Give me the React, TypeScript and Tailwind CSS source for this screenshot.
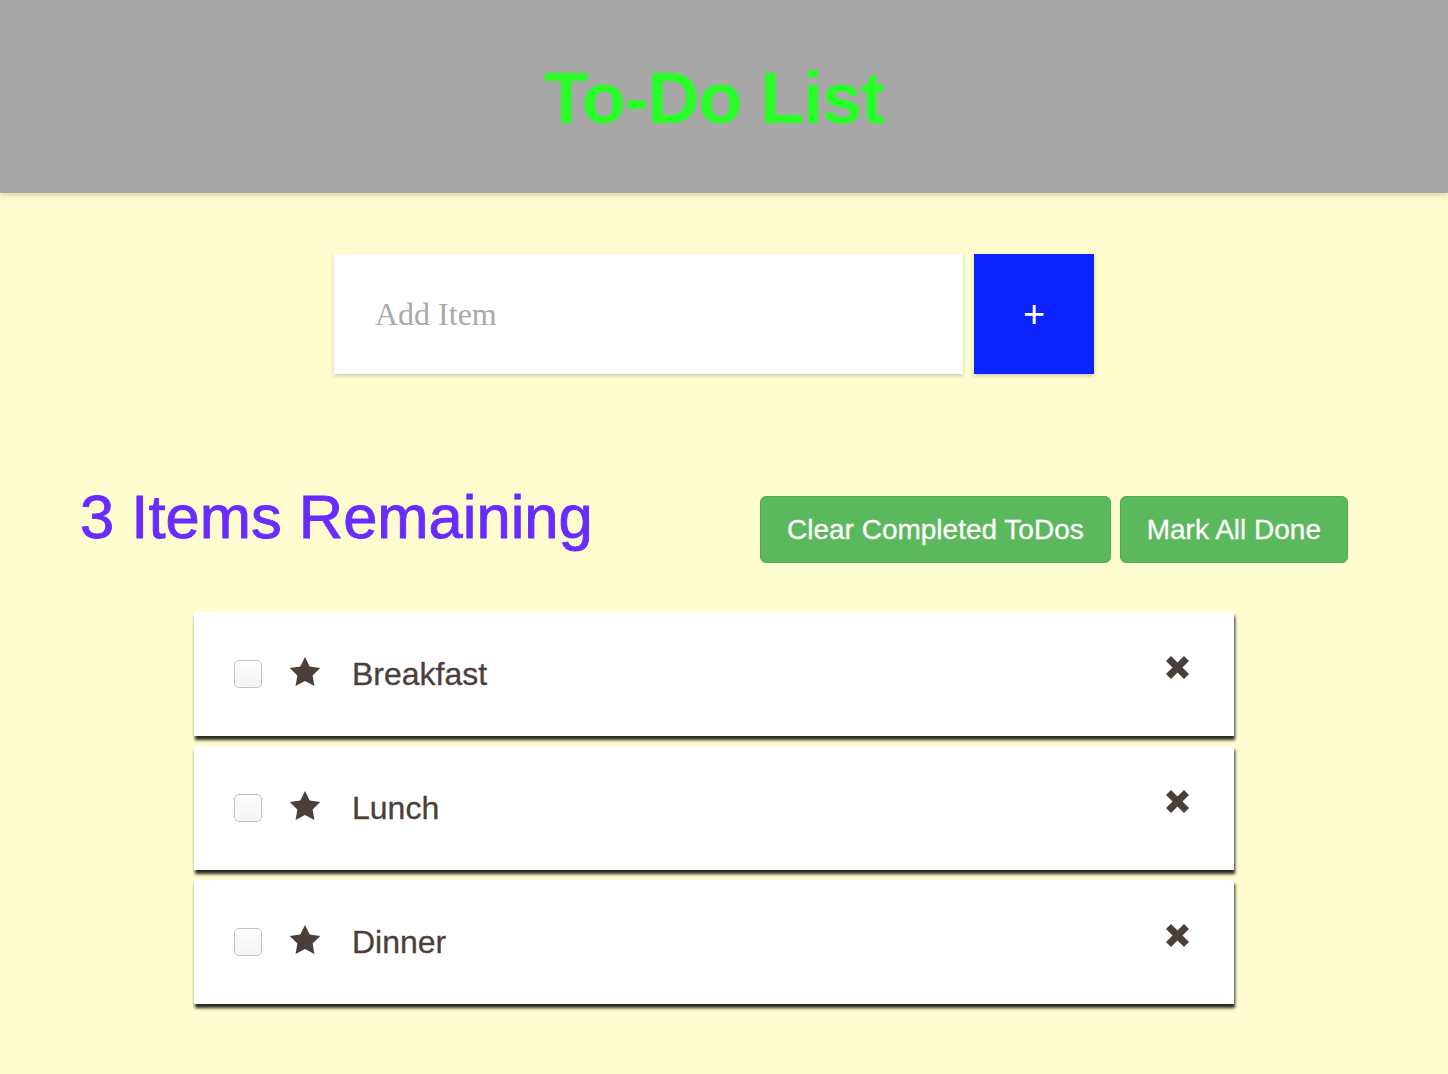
import React, { useState } from "react";

type Todo = { id: number; text: string; done: boolean };

const sans = "font-['Liberation_Sans',Arial,sans-serif]";

const Star = () => (
  <svg width="32" height="29" viewBox="2 2 20 19.02" className="shrink-0 mb-[6px]">
    <polygon
      points="12,2 15.09,8.26 22,9.27 17,14.14 18.18,21.02 12,17.77 5.82,21.02 7,14.14 2,9.27 8.91,8.26"
      fill="#4b3f3b"
    />
  </svg>
);

const Cross = () => (
  <svg width="27" height="27" viewBox="0 0 27 27">
    <line x1="4.5" y1="4.5" x2="22.5" y2="22.5" stroke="#4b3f3b" strokeWidth="7" />
    <line x1="22.5" y1="4.5" x2="4.5" y2="22.5" stroke="#4b3f3b" strokeWidth="7" />
  </svg>
);

const TodoRow = ({ todo, onToggle, onRemove }: { todo: Todo; onToggle: () => void; onRemove: () => void }) => (
  <div className="flex items-center h-[124px] bg-white pl-[40px] pr-[43px] shadow-[1px_4px_3px_rgba(0,0,0,0.85)]">
    <input
      type="checkbox"
      checked={todo.done}
      onChange={onToggle}
      className="appearance-none w-[28px] h-[28px] shrink-0 rounded-[5px] border border-[#c2c2c2] bg-gradient-to-b from-white to-[#f3f3f3] checked:bg-[#4b3f3b]"
    />
    <div className="ml-[27px]">
      <Star />
    </div>
    <span
      className={`ml-[31px] flex-1 text-[32px] text-[#4a3f3a] [-webkit-text-stroke-width:0.3px] ${todo.done ? "line-through" : ""}`}
    >
      {todo.text}
    </span>
    <button onClick={onRemove} className="self-start mt-[42px]">
      <Cross />
    </button>
  </div>
);

export default function App() {
  const [todos, setTodos] = useState<Todo[]>([
    { id: 1, text: "Breakfast", done: false },
    { id: 2, text: "Lunch", done: false },
    { id: 3, text: "Dinner", done: false },
  ]);
  const [draft, setDraft] = useState("");

  const remaining = todos.filter((t) => !t.done).length;

  const addTodo = () => {
    if (!draft.trim()) return;
    setTodos([...todos, { id: Date.now(), text: draft.trim(), done: false }]);
    setDraft("");
  };

  return (
    <div className={`min-h-[1074px] bg-[#fffdd0] ${sans}`}>
      <header className="relative z-10 h-[193px] bg-[#a8a8a8] shadow-[0_2px_6px_rgba(0,0,0,0.18)]">
        <div className="w-[1428px] pt-[62px] text-center">
          <h1 className="text-[72px] font-bold leading-none text-[#28ff28] tracking-[-1.1px]">To-Do List</h1>
        </div>
      </header>

      <div className="w-[1428px] pb-[60px]">
        <div className="flex justify-center gap-[11px] mt-[61px]">
          <input
            value={draft}
            onChange={(e) => setDraft(e.target.value)}
            onKeyDown={(e) => e.key === "Enter" && addTodo()}
            placeholder="Add Item"
            className="w-[629px] h-[120px] bg-white pl-[41px] text-[32px] font-['Liberation_Serif',serif] text-[#333] placeholder:text-[#a9a9a9] outline-none shadow-[0_2px_4px_rgba(0,0,0,0.2)]"
          />
          <button
            onClick={addTodo}
            className="w-[120px] h-[120px] bg-[#0c22ff] text-white text-[38px] leading-none flex items-center justify-center shadow-[0_2px_4px_rgba(0,0,0,0.2)]"
          >
            +
          </button>
        </div>

        <div className="flex items-start justify-between px-[80px] mt-[112px]">
          <h2 className="text-[61.5px] leading-none text-[#6a2bff] [-webkit-text-stroke-width:0.9px]">
            {remaining} Items Remaining
          </h2>
          <div className="flex gap-[9px] mt-[10px]">
            <button
              onClick={() => setTodos(todos.filter((t) => !t.done))}
              className="h-[67px] px-[26px] rounded-[6px] border border-[#4cae4c] bg-[#5cb85c] text-white text-[28px] [-webkit-text-stroke-width:0.3px]"
            >
              Clear Completed ToDos
            </button>
            <button
              onClick={() => setTodos(todos.map((t) => ({ ...t, done: true })))}
              className="h-[67px] px-[26px] rounded-[6px] border border-[#4cae4c] bg-[#5cb85c] text-white text-[28px] [-webkit-text-stroke-width:0.3px]"
            >
              Mark All Done
            </button>
          </div>
        </div>

        <div className="w-[1040px] mx-auto mt-[49px] flex flex-col gap-[10px]">
          {todos.map((t) => (
            <TodoRow
              key={t.id}
              todo={t}
              onToggle={() => setTodos(todos.map((x) => (x.id === t.id ? { ...x, done: !x.done } : x)))}
              onRemove={() => setTodos(todos.filter((x) => x.id !== t.id))}
            />
          ))}
        </div>
      </div>
    </div>
  );
}
